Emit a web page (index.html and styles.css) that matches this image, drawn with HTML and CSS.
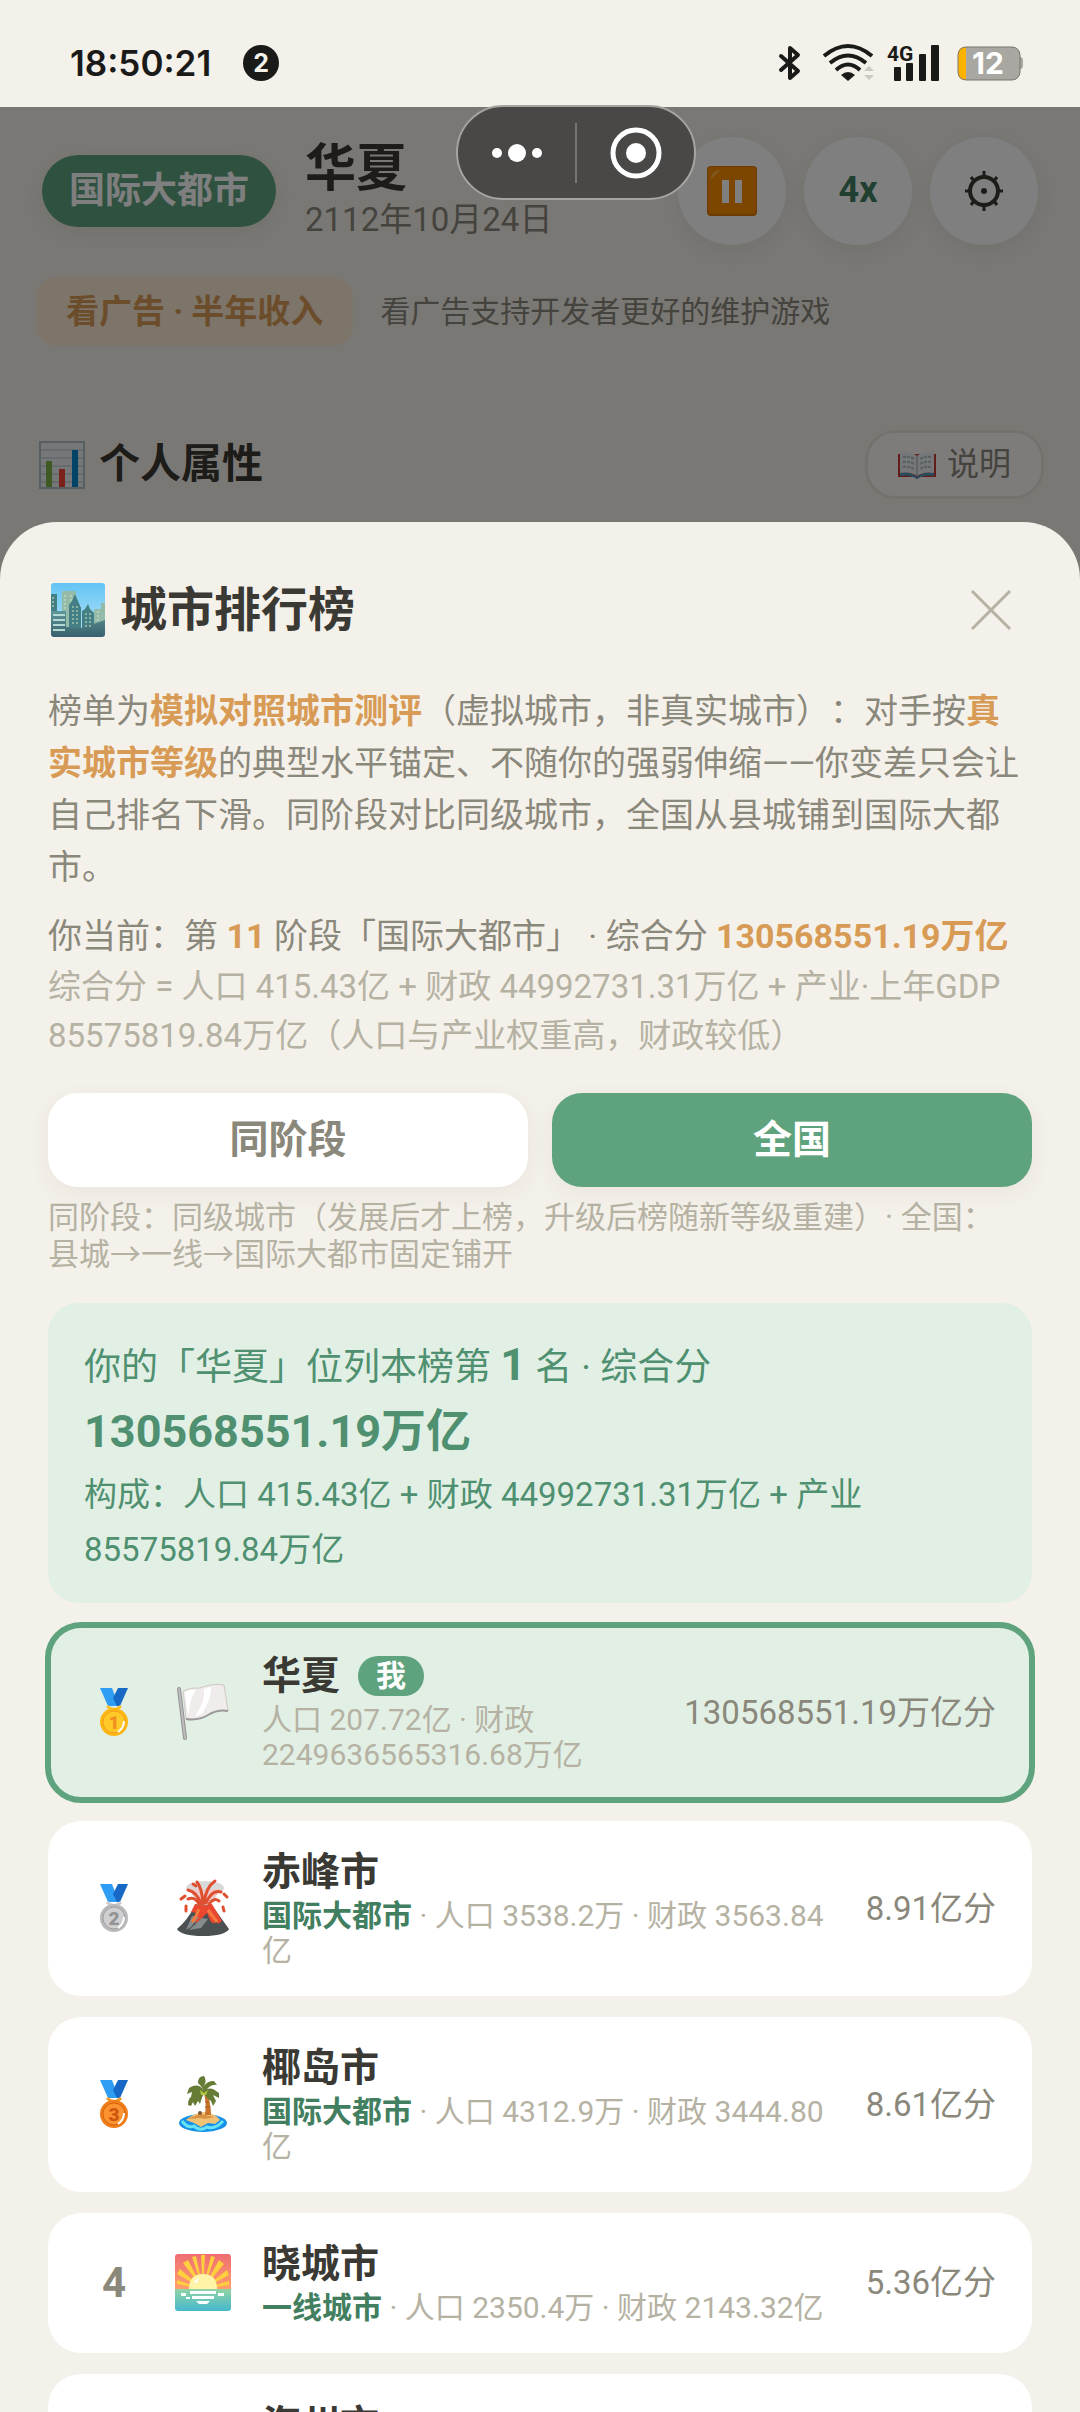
FILE: index.html
```html
<!doctype html>
<html lang="zh-CN">
  <head>
    <meta charset="UTF-8" />
    <meta name="viewport" content="width=device-width, initial-scale=1" />
    <title>城市排行榜</title>
    <link rel="stylesheet" href="styles.css">
  </head>
  <body>
    <!-- Status bar -->
    <div class="status-bar">
      <span class="clock">18:50:21</span>
      <span class="notice-count">2</span>
      <div class="status-icons">
        <svg class="icon-bluetooth" width="22" height="38" viewBox="0 0 22 38" fill="none" stroke="#1a1a18" stroke-width="4" stroke-linejoin="round" stroke-linecap="round">
          <path d="M2 12L19 27L11 34V4L19 11L2 26" />
        </svg>
        <svg class="icon-wifi" width="52" height="38" viewBox="0 0 52 38" fill="none" stroke="#1a1a18" stroke-width="4">
          <path d="M1 12Q25 -8 49 12" />
          <path d="M7 19Q25 4 43 19" />
          <path d="M13 26Q25 15 37 26" />
          <path d="M18 31Q25 25 32 31L25 37Z" fill="#1a1a18" stroke="none" />
          <path d="M41 27L46 22L51 27ZM41 31L46 36L51 31Z" fill="#cbc9c4" stroke="none" />
        </svg>
        <svg class="icon-signal" width="54" height="38" viewBox="0 0 54 38">
          <text class="net-label" x="0" y="17">4G</text>
          <g fill="#1a1a18">
            <rect x="7" y="23" width="7" height="14" rx="1" />
            <rect x="19" y="19" width="7" height="18" rx="1" />
            <rect x="32" y="10" width="7" height="27" rx="1" />
            <rect x="44" y="1" width="8" height="36" rx="1" />
          </g>
        </svg>
        <svg class="icon-battery" width="68" height="38" viewBox="0 0 68 38">
          <path d="M64 13H65Q67 14 67 16V22Q67 24 65 25H64Z" fill="#a8a7a1" />
          <rect x="2" y="3" width="62" height="33" rx="8" fill="#a8a7a1" />
          <path d="M10 3H9Q2 3 2 11V28Q2 36 9 36H10Z" fill="#ffb300" />
          <rect x="2" y="3" width="62" height="33" rx="8" fill="none" stroke="#77766f" />
          <text class="battery-label" x="32" y="30" text-anchor="middle">12</text>
        </svg>
      </div>
    </div>

    <!-- Game screen -->
    <main class="game">
      <header class="game-header">
        <span class="level-badge">国际大都市</span>
        <div class="city">
          <h1>华夏</h1>
          <div class="date">2112年10月24日</div>
        </div>
        <div class="controls">
          <button type="button" aria-label="暂停">
            <svg width="50" height="50" viewBox="0 0 50 50">
              <rect width="50" height="50" rx="4" fill="#d97706" />
              <rect x="1" y="1" width="48" height="47" rx="4" fill="#fb8c00" />
              <path d="M4 14Q4 4 14 4Q8 8 4 14Z" fill="#ffb74d" />
              <path d="M15 14H22V37H15ZM28 14H35V37H28Z" fill="#fff" />
            </svg>
          </button>
          <button type="button" class="speed">4x</button>
          <button type="button" aria-label="设置">
            <svg width="38" height="40" viewBox="0 0 38 40" fill="none" stroke="#3a3933" stroke-width="3">
              <circle cx="19" cy="20" r="14" stroke-width="4" />
              <circle cx="19" cy="20" r="3" fill="#3a3933" stroke="none" />
              <path d="M19 6V0M19 34V40M5 20H0M33 20H38M9 10L6 6M29 10L32 6M9 30L6 34M29 30L32 34" />
            </svg>
          </button>
        </div>
      </header>

      <div class="ad-row">
        <button type="button" class="ad-button">看广告 · 半年收入</button>
        <span>看广告支持开发者更好的维护游戏</span>
      </div>

      <div class="section-head">
        <h2>
          <svg width="46" height="48" viewBox="0 0 46 48">
            <rect x="1" y="1" width="44" height="46" fill="#eceff1" stroke="#b0bec5" stroke-width="2" />
            <path d="M1 9H45M1 17H45M1 25H45M1 33H45M1 41H45" stroke="#b0bec5" />
            <path d="M7 20H13V46H7Z" fill="#7cb342" />
            <path d="M20 28H26V46H20Z" fill="#f44336" />
            <path d="M33 9H39V46H33Z" fill="#0288d1" />
          </svg>
          个人属性
        </h2>
        <button type="button" class="help-button">
          <svg width="38" height="28" viewBox="0 0 38 28">
            <path d="M0 3H38V26H22L19 28L16 26H0Z" fill="#c6392f" />
            <path d="M2 22Q12 20 19 26Q26 20 36 22V25Q26 23 19 28Q12 23 2 25Z" fill="#4b9cc4" />
            <path d="M2 1Q13 0 19 5V25Q12 20 2 22ZM36 1Q25 0 19 5V25Q26 20 36 22Z" fill="#eceff1" />
            <path d="M5 6Q11 5 16 8M5 11Q11 10 16 13M5 16Q11 15 16 18M33 6Q27 5 22 8M33 11Q27 10 22 13M33 16Q27 15 22 18" fill="none" stroke="#b0bec5" stroke-width="2" stroke-dasharray="3 1" />
            <path d="M19 5V25" stroke="#90a4ae" />
          </svg>
          说明
        </button>
      </div>
    </main>

    <!-- Ranking sheet -->
    <div class="mask">
      <section class="sheet" role="dialog" aria-labelledby="sheet-title">
        <div class="sheet-head">
          <h2 id="sheet-title">
            <svg width="54" height="54" viewBox="0 0 54 54">
              <defs>
                <linearGradient id="day" x2="0" y2="1">
                  <stop stop-color="#64c4f4" />
                  <stop offset="1" stop-color="#b9e6f7" />
                </linearGradient>
                <linearGradient id="front" x2="0" y2="1">
                  <stop stop-color="#5f9799" />
                  <stop offset="1" stop-color="#37606c" />
                </linearGradient>
              </defs>
              <rect width="54" height="54" rx="3" fill="url(#day)" />
              <path d="M11 8H25V50H11ZM43 26H50V20H54V46H43Z" fill="#94bba9" />
              <path d="M0 11H6V28H0ZM18 22L21 18L24 11L27 18L30 25V46H18ZM31 28L34 26L37 21L39 26L43 30V48H31Z" fill="#447f86" />
              <path d="M0 28H15V44L30 45L54 37V51Q54 54 51 54H3Q0 54 0 51Z" fill="url(#front)" />
              <path d="M2 32H14M2 37H14M2 42H14M2 47H14" stroke="#b4d9d4" stroke-width="2" />
              <path d="M14 12V26M20 12V20M22 23V43M26 23V43M35 30V45M39 30V45M2 14V25M47 28V40" stroke="#cfe9bd" stroke-width="1" stroke-dasharray="2 2" />
            </svg>
            城市排行榜
          </h2>
          <button type="button" class="close" aria-label="关闭">
            <svg width="40" height="40" viewBox="0 0 40 40" stroke="#b5b2a3" stroke-width="3">
              <path d="M1 1L39 39M39 1L1 39" />
            </svg>
          </button>
        </div>

        <p class="intro">榜单为<b>模拟对照城市测评</b>（虚拟城市，非真实城市）：对手按<b>真实城市等级</b>的典型水平锚定、不随你的强弱伸缩——你变差只会让自己排名下滑。同阶段对比同级城市，全国从县城铺到国际大都市。</p>
        <p class="current">你当前：第 <b>11</b> 阶段「国际大都市」 · 综合分 <b>130568551.19万亿</b></p>
        <p class="formula">综合分 = 人口 415.43亿 + 财政 44992731.31万亿 + 产业·上年GDP 85575819.84万亿（人口与产业权重高，财政较低）</p>

        <div class="tabs">
          <button type="button">同阶段</button>
          <button type="button" class="active">全国</button>
        </div>
        <p class="hint">同阶段：同级城市（发展后才上榜，升级后榜随新等级重建）· 全国：<br>县城→一线→国际大都市固定铺开</p>

        <div class="summary">
          <p class="summary-rank">你的「华夏」位列本榜第 <b>1</b> 名 · 综合分 <b>130568551.19万亿</b></p>
          <p class="summary-parts">构成：人口 415.43亿 + 财政 44992731.31万亿 + 产业 85575819.84万亿</p>
        </div>

        <ol class="ranking">
          <li class="row me">
            <div class="rank">
              <svg width="28" height="48" viewBox="0 0 28 48" role="img" aria-label="1">
                <path d="M0 0H12L19 18H8Z" fill="#2f9df4" />
                <path d="M18 0H28L20 18H17L13 10Z" fill="#1769c5" />
                <path d="M7 18Q14 25 21 18" fill="none" stroke="#fbc02d" stroke-width="3" />
                <circle cx="14" cy="34" r="14" fill="#fbb816" />
                <circle cx="14" cy="34" r="11" fill="#ffca28" stroke="#f59b1b" />
                <path d="M18 44Q24 40 24 33" fill="none" stroke="#fff" stroke-width="2" />
                <text class="medal-number" x="14" y="41" fill="#f18e1f">1</text>
              </svg>
            </div>
            <div class="emblem">
              <svg width="52" height="58" viewBox="0 0 52 58">
                <path d="M6 8Q14 4 23 5Q35 0 47 2L51 28Q41 26 31 32Q21 38 9 36Z" fill="#f0ecec" stroke="#d1c7c3" stroke-width="1" />
                <path d="M8 9Q14 6 19 7Q14 14 13 22L11 34ZM27 6L34 4Q34 17 25 31Q21 33 18 33Q28 20 27 6Z" fill="#fff" />
                <path d="M9 36Q21 38 31 32Q41 26 51 28" fill="none" stroke="#999" stroke-width="2" />
                <path d="M2 6L8 55" stroke="#929292" stroke-width="4" stroke-linecap="round" />
                <path d="M2 6L8 55" stroke="#bdbdbd" stroke-width="2" stroke-linecap="round" />
              </svg>
            </div>
            <div class="info">
              <h3>华夏<span class="me-tag">我</span></h3>
              <p>人口 207.72亿 · 财政 2249636565316.68万亿</p>
            </div>
            <div class="score">130568551.19万亿分</div>
          </li>

          <li class="row">
            <div class="rank">
              <svg width="28" height="48" viewBox="0 0 28 48" role="img" aria-label="2">
                <path d="M0 0H12L19 18H8Z" fill="#2f9df4" />
                <path d="M18 0H28L20 18H17L13 10Z" fill="#1769c5" />
                <path d="M7 18Q14 25 21 18" fill="none" stroke="#ccccd0" stroke-width="3" />
                <circle cx="14" cy="34" r="14" fill="#b9b9bc" />
                <circle cx="14" cy="34" r="11" fill="#cfcfd1" stroke="#9f9fa2" />
                <path d="M18 44Q24 40 24 33" fill="none" stroke="#fff" stroke-width="2" />
                <text class="medal-number" x="14" y="41" fill="#929295">2</text>
              </svg>
            </div>
            <div class="emblem">
              <svg width="52" height="58" viewBox="0 0 52 58">
                <ellipse cx="28" cy="9" rx="19" ry="7" fill="#d9d9d9" />
                <path d="M12 10L44 10L32 27H22Z" fill="#efcaca" />
                <path d="M19 25Q26 28 34 25L52 50Q48 57 26 57Q4 57 0 50Q10 42 19 25Z" fill="#4b5052" />
                <path d="M18 25Q26 28 35 25L45 42L41 45L36 36L38 45L34 43L30 34L20 44L15 42L21 34L14 33Z" fill="#e9482f" />
                <path d="M15 37L22 38L14 48L9 51ZM25 39L31 40L24 49L12 51Z" fill="#868b8e" />
                <path d="M22 30L18 39L15 43M31 31L40 43" fill="none" stroke="#f47b3d" stroke-width="3" />
                <g fill="none" stroke="#df5030" stroke-width="3" stroke-linecap="round">
                  <path d="M26 25Q25 9 20 3M27 24Q29 8 38 2M24 25Q20 13 11 11M29 24Q35 10 44 13M22 25Q18 17 11 20M32 25Q37 18 42 22" />
                  <path d="M8 17L4 20M9 27V32M46 28L47 32M47 15L50 18M16 5L19 7" />
                </g>
              </svg>
            </div>
            <div class="info">
              <h3>赤峰市</h3>
              <p><b>国际大都市</b> · 人口 3538.2万 · 财政 3563.84亿</p>
            </div>
            <div class="score">8.91亿分</div>
          </li>

          <li class="row">
            <div class="rank">
              <svg width="28" height="48" viewBox="0 0 28 48" role="img" aria-label="3">
                <path d="M0 0H12L19 18H8Z" fill="#2f9df4" />
                <path d="M18 0H28L20 18H17L13 10Z" fill="#1769c5" />
                <path d="M7 18Q14 25 21 18" fill="none" stroke="#f09a2d" stroke-width="3" />
                <circle cx="14" cy="34" r="14" fill="#ef7d1a" />
                <circle cx="14" cy="34" r="11" fill="#fb9430" stroke="#d8610c" />
                <path d="M18 44Q24 40 24 33" fill="none" stroke="#fff" stroke-width="2" />
                <text class="medal-number" x="14" y="41" fill="#cf550e">3</text>
              </svg>
            </div>
            <div class="emblem">
              <svg width="52" height="58" viewBox="0 0 52 58">
                <ellipse cx="26" cy="48" rx="24" ry="9" fill="#1592e8" />
                <path d="M5 46Q11 54 17 51Q23 57 30 52Q38 55 46 46" fill="none" stroke="#67e3f5" stroke-width="3" />
                <path d="M9 45Q17 38 27 37Q38 38 43 45L38 49L31 48L24 52L17 48Z" fill="#f0c276" />
                <path d="M10 44L23 39L38 42L28 44L23 43Z" fill="#db9144" />
                <path d="M26 16Q30 26 28 40H34Q34 27 29 15Z" fill="#c9742b" />
                <path d="M28 27H32M28 32H33" stroke="#a65921" />
                <circle cx="23" cy="38" r="2" fill="#7b5536" />
                <path d="M27 16Q22 7 12 13L10 19L15 17L14 22L20 18Q10 22 11 30L14 31L16 27L18 31L21 26L23 29Q25 22 27 18Q29 23 34 26L36 31L39 26L36 20L42 23L42 18L36 14Q33 13 30 14Q35 9 40 10L37 6Q30 6 27 11Q30 5 27 1Q21 1 21 8L23 10Q25 12 27 16Z" fill="#667c36" />
                <path d="M23 15L27 18L31 15L29 20H24Z" fill="#afc73a" />
              </svg>
            </div>
            <div class="info">
              <h3>椰岛市</h3>
              <p><b>国际大都市</b> · 人口 4312.9万 · 财政 3444.80亿</p>
            </div>
            <div class="score">8.61亿分</div>
          </li>

          <li class="row">
            <div class="rank">4</div>
            <div class="emblem">
              <svg width="56" height="57" viewBox="0 0 56 57">
                <defs>
                  <linearGradient id="dawn" x2="0" y2="1">
                    <stop stop-color="#ee6e73" />
                    <stop offset="1" stop-color="#ffa069" />
                  </linearGradient>
                  <linearGradient id="sea" x2="0" y2="1">
                    <stop stop-color="#91d3a4" />
                    <stop offset="1" stop-color="#45b8cd" />
                  </linearGradient>
                </defs>
                <path d="M3 0H53Q56 0 56 3V36H0V3Q0 0 3 0Z" fill="url(#dawn)" />
                <path d="M0 35H56V54Q56 57 53 57H3Q0 57 0 54Z" fill="url(#sea)" />
                <path d="M28 35L2 30V26ZM28 35L2 20L5 15ZM28 35L8 9L13 6ZM28 35L17 3L21 2ZM28 35L26 1H30ZM28 35L36 2L40 3ZM28 35L44 6L49 10ZM28 35L52 16L54 21ZM28 35L54 27V31Z" fill="#ffd03e" />
                <path d="M14 35Q14 20 28 20Q42 20 42 35Z" fill="#fff3a8" />
                <path d="M19 29Q21 25 24 24L22 29Z" fill="#fff" />
                <path d="M15 37H41V40H15ZM17 42H39V45H17ZM21 47H35L32 50H24ZM6 39H11V42H6ZM11 43H15V45H11ZM43 39H49V42H43Z" fill="#f7ffff" />
              </svg>
            </div>
            <div class="info">
              <h3>晓城市</h3>
              <p><b>一线城市</b> · 人口 2350.4万 · 财政 2143.32亿</p>
            </div>
            <div class="score">5.36亿分</div>
          </li>

          <li class="row">
            <div class="rank"></div>
            <div class="emblem"></div>
            <div class="info">
              <h3>海州市</h3>
            </div>
          </li>
        </ol>
      </section>
    </div>

    <!-- Mini program menu -->
    <div class="capsule">
      <button type="button" aria-label="更多">
        <svg width="52" height="20" viewBox="0 0 52 20" fill="#fff">
          <circle cx="6" cy="10" r="5" />
          <circle cx="26" cy="10" r="9" />
          <circle cx="46" cy="10" r="5" />
        </svg>
      </button>
      <button type="button" aria-label="退出">
        <svg width="52" height="52" viewBox="0 0 52 52">
          <circle cx="26" cy="26" r="23" fill="none" stroke="#fff" stroke-width="5" />
          <circle cx="26" cy="26" r="10" fill="#fff" />
        </svg>
      </button>
    </div>
  </body>
</html>
```
FILE: styles.css
```css
* {
  box-sizing: border-box;
}

body {
  margin: 0;
  height: 100vh;
  display: flex;
  flex-direction: column;
  position: relative;
  overflow: hidden;
  font-family: Roboto, "Noto Sans CJK SC", sans-serif;
  line-height: 1.2;
  background-color: #f4f1ea;
  color: #3a3933;
  text-spacing-trim: space-all;
}

h1,
h2,
h3,
p,
ol {
  margin: 0;
  padding: 0;
}

button {
  border: none;
  padding: 0;
  margin: 0;
  font-family: inherit;
  line-height: inherit;
  cursor: pointer;
}

svg {
  display: block;
  flex-shrink: 0;
  overflow: visible;
}

/* Status bar */
.status-bar {
  display: flex;
  align-items: center;
  height: 107px;
  flex-shrink: 0;
  padding: 18px 56px 0 70px;
  color: #1a1a18;
}

.clock {
  font-family: Inter, sans-serif;
  font-size: 35px;
  font-weight: 600;
}

.notice-count {
  display: flex;
  align-items: center;
  justify-content: center;
  width: 36px;
  height: 36px;
  margin-left: 32px;
  border-radius: 50%;
  background-color: #1a1a18;
  color: #f4f1ea;
  font-family: Inter, sans-serif;
  font-size: 25px;
  font-weight: 700;
}

.status-icons {
  display: flex;
  align-items: center;
  margin-left: auto;
}

.icon-wifi {
  margin-left: 22px;
}

.icon-signal {
  margin-left: 12px;
}

.icon-battery {
  margin-left: 15px;
}

.net-label {
  font-size: 21px;
  font-weight: 700;
  fill: #1a1a18;
}

.battery-label {
  font-family: Inter, sans-serif;
  font-size: 30px;
  font-weight: 700;
  fill: #fff;
}

/* Game screen */
.game-header {
  display: flex;
  align-items: center;
  padding: 30px 42px 0;
}

.level-badge {
  padding: 0 27px;
  border-radius: 36px;
  background-color: #5fa37e;
  color: #fff;
  font-size: 36px;
  font-weight: 700;
  line-height: 72px;
  box-shadow: 0 6px 24px rgba(60, 50, 30, 0.08);
}

.city {
  margin-left: 29px;
}

.city h1 {
  font-size: 51px;
  line-height: 58px;
}

.date {
  color: #8a877b;
  font-size: 33px;
  line-height: 44px;
}

.controls {
  display: flex;
  gap: 18px;
  margin-left: auto;
}

.controls button {
  display: flex;
  align-items: center;
  justify-content: center;
  width: 108px;
  height: 108px;
  border-radius: 50%;
  background-color: #fff;
  box-shadow: 0 6px 24px rgba(60, 50, 30, 0.08);
}

.controls .speed {
  color: #427f60;
  font-size: 36px;
  font-weight: 700;
}

.ad-row {
  display: flex;
  align-items: center;
  gap: 27px;
  padding: 32px 36px 0;
  color: #8a877b;
  font-size: 30px;
}

.ad-button {
  height: 69px;
  padding: 0 30px;
  border-radius: 21px;
  background-color: #fbe9d5;
  color: #d89b56;
  font-size: 33px;
  font-weight: 700;
}

.section-head {
  display: flex;
  align-items: center;
  justify-content: space-between;
  padding: 84px 36px 0 39px;
}

.section-head h2 {
  display: flex;
  align-items: center;
  gap: 14px;
  font-size: 41px;
}

.help-button {
  display: flex;
  align-items: center;
  gap: 11px;
  height: 69px;
  padding: 0 30px;
  border: 3px solid #e8e4da;
  border-radius: 30px;
  background-color: #fbf9f4;
  color: #8a877b;
  font-size: 32px;
}

/* Sheet */
.mask {
  position: absolute;
  top: 107px;
  right: 0;
  bottom: 0;
  left: 0;
  display: flex;
  flex-direction: column;
  justify-content: flex-end;
  background-color: rgba(0, 0, 0, 0.5);
}

.sheet {
  height: 82%;
  padding: 48px 48px 0;
  border-radius: 57px 57px 0 0;
  background-color: #f4f1ea;
  overflow: hidden;
}

.sheet-head {
  display: flex;
  align-items: center;
  justify-content: space-between;
  height: 80px;
  margin-bottom: 35px;
}

.sheet-head h2 {
  display: flex;
  align-items: center;
  gap: 15px;
  padding-left: 3px;
  font-size: 47px;
}

.close {
  display: flex;
  align-items: center;
  justify-content: center;
  width: 82px;
  height: 80px;
  background: none;
}

.intro,
.current {
  color: #8a877b;
  font-size: 34px;
  line-height: 52px;
}

.intro b,
.current b {
  color: #d89b56;
}

.current {
  margin-top: 17px;
}

.formula {
  color: #b5b2a3;
  font-size: 33px;
  line-height: 49px;
}

.tabs {
  display: grid;
  grid-template-columns: 1fr 1fr;
  gap: 24px;
  margin-top: 33px;
}

.tabs button {
  height: 94px;
  border-radius: 30px;
  background-color: #fff;
  color: #8a877b;
  font-size: 39px;
  font-weight: 700;
  box-shadow: 0 6px 24px rgba(60, 50, 30, 0.06);
}

.tabs .active {
  background-color: #5fa37e;
  color: #fff;
}

.hint {
  margin-top: 12px;
  color: #b5b2a3;
  font-size: 31px;
  line-height: 37px;
}

.summary {
  margin: 30px 0 22px;
  padding: 30px 36px 26px;
  border-radius: 30px;
  background-color: #e2efe5;
  color: #4f9070;
}

.summary-rank {
  font-size: 37px;
  line-height: 64px;
}

.summary-rank b {
  font-size: 45px;
}

.summary-parts {
  font-size: 33px;
  line-height: 55px;
}

/* Ranking list */
.ranking {
  display: flex;
  flex-direction: column;
  gap: 21px;
  list-style: none;
}

.row {
  display: flex;
  align-items: center;
  gap: 24px;
  padding: 28px 36px;
  border-radius: 33px;
  background-color: #fff;
}

.row.me {
  background-color: #e2efe5;
  outline: 6px solid #5fa37e;
  outline-offset: -3px;
}

.rank {
  display: flex;
  justify-content: center;
  width: 60px;
  flex-shrink: 0;
  color: #8a877b;
  font-size: 42px;
  font-weight: 700;
}

.medal-number {
  font-size: 19px;
  font-weight: 900;
  text-anchor: middle;
}

.emblem {
  display: flex;
  justify-content: center;
  width: 70px;
  flex-shrink: 0;
}

.info {
  flex: 1;
}

.info h3 {
  display: flex;
  align-items: center;
  gap: 18px;
  font-size: 39px;
  line-height: 47px;
}

.me-tag {
  padding: 0 18px;
  border-radius: 21px;
  background-color: #5fa37e;
  color: #fff;
  font-size: 30px;
  line-height: 40px;
}

.info p {
  margin-top: 2px;
  color: #b5b2a3;
  font-size: 30px;
  line-height: 35px;
}

.info b {
  color: #427f60;
}

.score {
  color: #8a877b;
  font-size: 33px;
  white-space: nowrap;
}

/* Mini program menu */
.capsule {
  position: absolute;
  top: 105px;
  left: 456px;
  display: flex;
  align-items: center;
  width: 240px;
  height: 95px;
  border: 2px solid #a5a4a1;
  border-radius: 48px;
  background-color: #494846;
}

.capsule button {
  display: flex;
  flex: 1;
  align-items: center;
  justify-content: center;
  height: 60px;
  background: none;
}

.capsule button + button {
  border-left: 2px solid #777673;
}
```
